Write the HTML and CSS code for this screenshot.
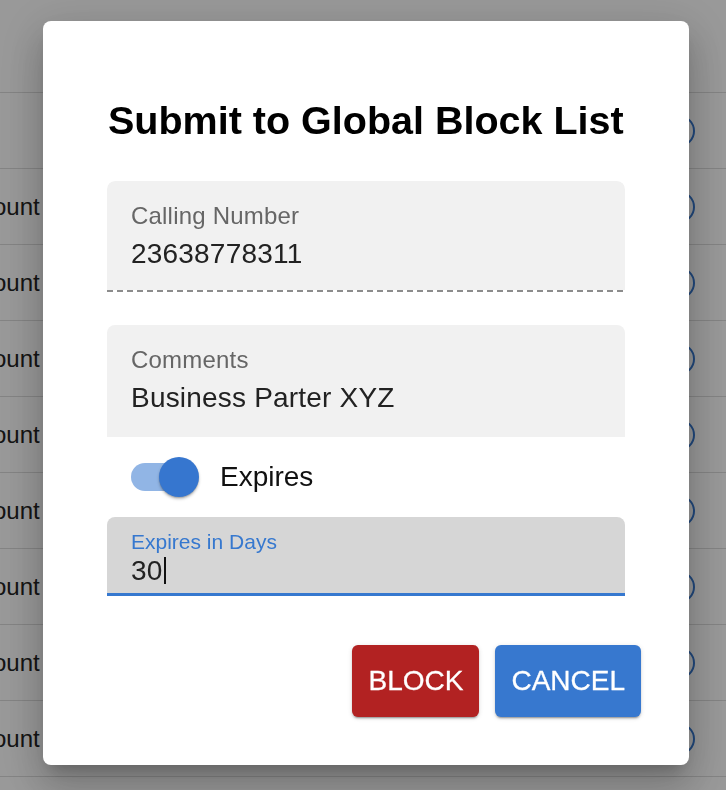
FILE: index.html
```html
<!DOCTYPE html>
<html lang="en">
<head>
    <meta charset="UTF-8">
    <meta name="viewport" content="width=device-width, initial-scale=1.0">
    <title>Submit to Global Block List</title>
    <link rel="stylesheet" href="styles.css">
</head>
<body>
    <div class="list">
        <div class="list-head"></div>
        <div class="list-row"><span class="row-name"></span><span class="row-action"></span></div>
        <div class="list-row"><span class="row-name">Account</span><span class="row-action"></span></div>
        <div class="list-row"><span class="row-name">Account</span><span class="row-action"></span></div>
        <div class="list-row"><span class="row-name">Account</span><span class="row-action"></span></div>
        <div class="list-row"><span class="row-name">Account</span><span class="row-action"></span></div>
        <div class="list-row"><span class="row-name">Account</span><span class="row-action"></span></div>
        <div class="list-row"><span class="row-name">Account</span><span class="row-action"></span></div>
        <div class="list-row"><span class="row-name">Account</span><span class="row-action"></span></div>
        <div class="list-row"><span class="row-name">Account</span><span class="row-action"></span></div>
        <div class="list-row"><span class="row-name">Account</span><span class="row-action"></span></div>
    </div>

    <div class="backdrop">
        <div class="dialog">
            <h2 class="dialog-title">Submit to Global Block List</h2>

            <div class="field field-readonly">
                <div class="field-label">Calling Number</div>
                <div class="field-value">23638778311</div>
            </div>

            <div class="field field-plain">
                <div class="field-label">Comments</div>
                <div class="field-value">Business Parter XYZ</div>
            </div>

            <div class="toggle-row">
                <span class="switch-track"></span>
                <span class="switch-thumb"></span>
                <span class="toggle-label">Expires</span>
            </div>

            <div class="field field-focused">
                <div class="field-label">Expires in Days</div>
                <div class="field-value">30<span class="caret"></span></div>
            </div>

            <div class="dialog-actions">
                <button class="btn btn-block">Block</button>
                <button class="btn btn-cancel">Cancel</button>
            </div>
        </div>
    </div>
</body>
</html>
```

FILE: styles.css
```css
body {
    margin: 0;
    font-family: 'Liberation Sans', Arial, Helvetica, sans-serif;
    background: white;
    color: #222;
    overflow: hidden;
}

.list {
    width: 726px;
}

.list-head {
    height: 92px;
    border-bottom: 1px solid #dcdcdc;
}

.list-row {
    height: 75px;
    border-bottom: 1px solid #dcdcdc;
    display: flex;
    align-items: center;
    justify-content: space-between;
    font-size: 24px;
    color: #222;
}

.row-name {
    margin-left: -47px;
}

.row-action {
    width: 28px;
    height: 28px;
    border: 2px solid #3678cf;
    border-radius: 50%;
    margin-right: 31px;
}

.backdrop {
    position: fixed;
    top: 0;
    left: 0;
    right: 0;
    bottom: 0;
    background: rgba(0,0,0,0.4);
    display: flex;
    align-items: flex-start;
    padding: 21px 0 0 43px;
}

.dialog {
    width: 646px;
    box-sizing: border-box;
    padding: 77px 64px 48px;
    background: white;
    border-radius: 8px;
    box-shadow: 0 11px 15px -7px rgba(0,0,0,0.2), 0 24px 38px 3px rgba(0,0,0,0.14), 0 9px 46px 8px rgba(0,0,0,0.12);
}

.dialog-title {
    margin: 0 0 38px;
    padding-left: 1px;
    font-size: 39.5px;
    line-height: 45px;
    font-weight: bold;
    color: #000;
}

.field {
    padding: 21px 24px 19px;
    border-radius: 8px 8px 0 0;
}

.field-label {
    font-size: 24px;
    line-height: 28px;
    letter-spacing: 0.2px;
    color: #666;
}

.field-value {
    margin-top: 7px;
    font-size: 28px;
    line-height: 34px;
    letter-spacing: 0.2px;
    color: #222;
}

.field-readonly {
    border-bottom: 2px solid transparent;
    background: repeating-linear-gradient(90deg, #8c8c8c 0 6px, transparent 6px 10px) left bottom / 100% 2px no-repeat border-box,
                linear-gradient(#f1f1f1, #f1f1f1) padding-box;
}

.field-plain {
    margin-top: 33px;
    padding-bottom: 20px;
    background: #f1f1f1;
    border-bottom: 2px solid transparent;
}

.toggle-row {
    height: 80px;
    display: flex;
    align-items: center;
    padding-left: 24px;
}

.switch-track {
    width: 66px;
    height: 28px;
    border-radius: 14px;
    background: #91b5e5;
}

.switch-thumb {
    width: 40px;
    height: 40px;
    margin-left: -38px;
    margin-right: 21px;
    border-radius: 50%;
    background: #3676cf;
    box-shadow: 0 2px 3px rgba(0,0,0,0.25), 0 1px 1px rgba(0,0,0,0.14);
}

.toggle-label {
    font-size: 28px;
    color: #111;
}

.field-focused {
    padding: 13px 24px 6px;
    background: #d6d6d6;
    border-bottom: 3px solid #3678cf;
}

.field-focused .field-label {
    font-size: 21px;
    line-height: 24px;
    letter-spacing: 0;
    color: #3678cf;
}

.field-focused .field-value {
    margin-top: 1px;
    line-height: 32px;
}

.caret {
    display: inline-block;
    width: 2px;
    height: 27px;
    margin-left: 1px;
    background: #111;
    vertical-align: -4px;
}

.dialog-actions {
    display: flex;
    justify-content: flex-end;
    gap: 16px;
    margin: 49px -16px 0 0;
}

.btn {
    height: 72px;
    padding: 0 16px;
    border: none;
    border-radius: 6px;
    font-family: inherit;
    font-size: 28px;
    text-transform: uppercase;
    color: white;
    -webkit-text-stroke: 0.3px white;
    cursor: pointer;
    box-shadow: 0 3px 1px -2px rgba(0,0,0,0.2), 0 2px 2px 0 rgba(0,0,0,0.14), 0 1px 5px 0 rgba(0,0,0,0.12);
}

.btn-block {
    background: #b22222;
}

.btn-cancel {
    background: #3778cf;
}
```
